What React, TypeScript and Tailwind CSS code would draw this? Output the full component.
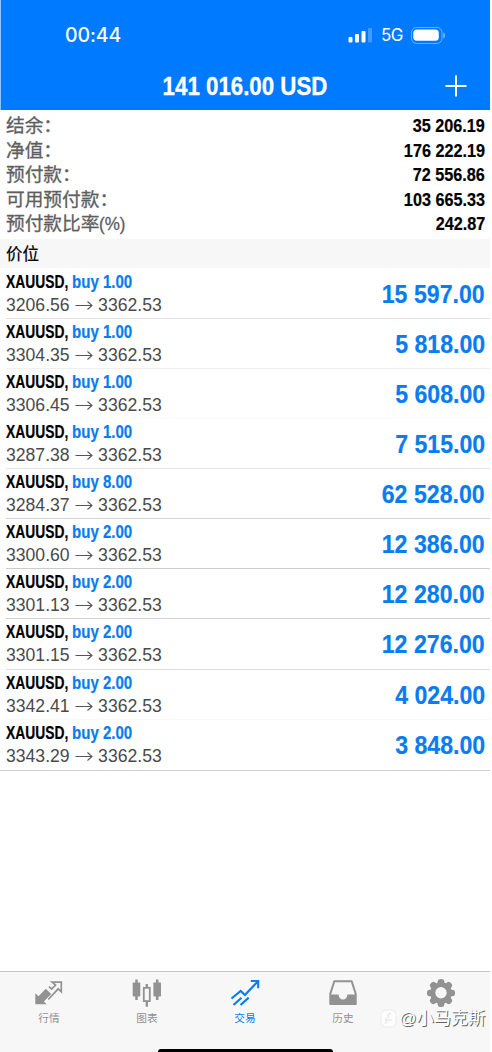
import type { ReactNode } from 'react';

const summary = [
  { label: '结余：', value: '35 206.19' },
  { label: '净值：', value: '176 222.19' },
  { label: '预付款：', value: '72 556.86' },
  { label: '可用预付款：', value: '103 665.33' },
  { label: '预付款比率', suffix: '(%)', value: '242.87' },
];

const positions = [
  { volume: '1.00', open: '3206.56', profit: '15 597.00', line: 'border-[#e0e0e0]' },
  { volume: '1.00', open: '3304.35', profit: '5 818.00', line: 'border-[#f0f0f0]' },
  { volume: '1.00', open: '3306.45', profit: '5 608.00', line: 'border-[#fcfcfc]' },
  { volume: '1.00', open: '3287.38', profit: '7 515.00', line: 'border-[#e4e4e4]' },
  { volume: '8.00', open: '3284.37', profit: '62 528.00', line: 'border-[#d2d2d2]' },
  { volume: '2.00', open: '3300.60', profit: '12 386.00', line: 'border-[#cccccc]' },
  { volume: '2.00', open: '3301.13', profit: '12 280.00', line: 'border-[#d2d2d2]' },
  { volume: '2.00', open: '3301.15', profit: '12 276.00', line: 'border-[#dedede]' },
  { volume: '2.00', open: '3342.41', profit: '4 024.00', line: 'border-[#f8f8f8]' },
  { volume: '2.00', open: '3343.29', profit: '3 848.00', line: 'border-transparent' },
];

const StatusBar = () => (
  <div className="flex h-[68px] items-center justify-between pl-[64px] pr-[44px] pt-[2px] text-white">
    <span className="pt-[2px] font-['Inter'] text-[19.5px] font-medium tracking-[-0.1px]">00:44</span>
    <div className="flex items-center">
      <svg className="mr-[8px]" width="25" height="16" viewBox="0 0 25 16" fill="#fff">
        <rect x="0.5" y="10" width="4" height="5.5" rx="1" />
        <rect x="7" y="7" width="4" height="8.5" rx="1" />
        <rect x="13.5" y="4" width="4" height="11.5" rx="1" />
        <rect x="20" y="1" width="4" height="14.5" rx="1" opacity="0.25" />
      </svg>
      <span className="w-[30px] pt-[2px] font-['Inter'] text-[17px] tracking-[-0.6px]">5G</span>
      <svg width="35" height="17" viewBox="0 0 35 17">
        <rect x="0.5" y="0.5" width="30.5" height="16" rx="5" fill="none" stroke="#fff" strokeOpacity="0.4" />
        <rect x="2.3" y="2.6" width="25.5" height="11.2" rx="3.6" fill="#fff" />
        <path d="M32.3 5.5c2.3.7 2.3 5.3 0 6z" fill="#fff" opacity="0.5" />
      </svg>
    </div>
  </div>
);

const Header = () => (
  <header className="mr-[2px] h-[110px] border-l border-[#8ec2fb] bg-[#007aff]">
    <StatusBar />
    <div className="grid h-[36px] grid-cols-[60px_1fr_60px] items-center text-white">
      <span />
      <h1 className="-ml-px origin-center scale-x-[0.857] whitespace-nowrap text-center text-[26px] font-bold leading-[36px] [-webkit-text-stroke:0.35px_currentColor]">
        141 016.00 USD
      </h1>
      <svg className="ml-[15px]" width="22" height="22" viewBox="0 0 22 22" stroke="#fff" strokeWidth="2">
        <path d="M11 0.5v21M0.5 11h21" />
      </svg>
    </div>
  </header>
);

const Arrow = () => (
  <svg className="ml-[5px] mr-[5.5px]" width="18" height="12" viewBox="0 0 18 12" fill="none" stroke="#555" strokeWidth="1.1">
    <path d="M0.5 6.5h16.5M12.5 2.5l4.5 4-4.5 4" />
  </svg>
);

const Tab = ({ label, active, children }: { label: string; active?: boolean; children: ReactNode }) => (
  <div className={active ? 'flex flex-col items-center text-[#087cf0]' : 'flex flex-col items-center text-[#929292]'}>
    <svg width="30" height="30" viewBox="0 0 30 30" fill="none" stroke="currentColor">
      {children}
    </svg>
    <span className="mt-[3px] h-[16px] text-[10.7px] leading-[16px]">{label}</span>
  </div>
);

const TabBar = () => (
  <nav className="relative mr-[2px] h-[81px] border-t border-[#c5c5c5] bg-[#f7f7f7]">
    <div className="grid grid-cols-5 pt-[5px]">
      <Tab label="行情">
        <path d="M1.3 27.3V16.2l3.2 3 7.3-7.4 5.4 5.3-7.3 7.4 2.8 2.8z" fill="currentColor" stroke="none" />
        <path d="M15 9.7l2.6 2.3 4-4-3.4-2.8H27.3V14.8L24.2 11.8 14.3 22.5" strokeWidth="1.7" />
      </Tab>
      <Tab label="图表">
        <path d="M4.5 2.5v20.5M25.2 2.5v20.5" strokeWidth="2.5" />
        <rect x="0.7" y="5.5" width="7.6" height="14" rx="0.7" fill="currentColor" stroke="none" />
        <rect x="21.4" y="5.5" width="7.6" height="14" rx="0.7" fill="currentColor" stroke="none" />
        <path d="M14.8 7v4M14.8 24.5v5.2" strokeWidth="2.3" />
        <rect x="11.8" y="10.8" width="6" height="13.3" strokeWidth="1.8" />
      </Tab>
      <Tab label="交易" active>
        <path d="M1.5 21.5L10.7 14l4.2 4L27.3 5M20.8 4h7.4v7.3" strokeWidth="2.1" />
        <path d="M3.5 28l8-7.3M10.5 28l8.2-7.4" strokeWidth="2.2" />
      </Tab>
      <Tab label="历史">
        <path d="M6.3 4.3h17.4l4 12.4v10.4H2.3V16.7z" strokeWidth="2" strokeLinejoin="round" />
        <path d="M2 17.5h8.5c.4 3.5 2 5 4.5 5s4.1-1.5 4.5-5H28v9.7H2z" fill="currentColor" stroke="none" />
      </Tab>
      <Tab label="">
        <g fill="currentColor" stroke="none">
          <path
            fillRule="evenodd"
            d="M12.2 2.8q2.8-1.8 5.6 0l.8 3 1 .4 2.8-1.5q3.2.7 3.9 3.9l-1.5 2.8.4 1 3 .8q1.8 2.8 0 5.6l-3 .8-.4 1 1.5 2.8q-.7 3.2-3.9 3.9l-2.8-1.5-1 .4-.8 3q-2.8 1.8-5.6 0l-.8-3-1-.4-2.8 1.5q-3.2-.7-3.9-3.9l1.5-2.8-.4-1-3-.8q-1.8-2.8 0-5.6l3-.8.4-1-1.5-2.8q.7-3.2 3.9-3.9l2.8 1.5 1-.4zM15 10a5.7 5.7 0 1 0 0 11.4a5.7 5.7 0 1 0 0-11.4z"
          />
        </g>
      </Tab>
    </div>
    {/* watermark */}
    <div className="absolute left-[380px] top-[34px] flex h-[24px] items-center">
      <svg width="17" height="19" viewBox="0 0 17 19" fill="none" strokeWidth="1.3">
        <rect x="1" y="1" width="15" height="17" rx="5" stroke="#f0f0f0" fill="#fdfdfd" />
        <path d="M6 15V9M6 11h6M8 9V6.5q0-2 3-2" stroke="#e9e9e9" />
      </svg>
      <span className="ml-[2px] whitespace-nowrap text-[17.2px] leading-[24px] text-white [text-shadow:1px_0.5px_0_#666]">
        @小马克斯
      </span>
    </div>
    <div className="absolute bottom-0 left-[158px] h-[3px] w-[175px] rounded-t-[3px] bg-black" />
  </nav>
);

export default function App() {
  return (
    <div className="flex h-[1052px] w-[492px] flex-col overflow-hidden bg-white font-['Liberation_Sans','Noto_Sans_CJK_SC',sans-serif] text-black">
      <Header />
      <section className="h-[129px] pl-[6px] pr-[7px] pt-[4px]">
        {summary.map((item) => (
          <div key={item.label} className="flex h-[24.5px] items-center justify-between">
            <span className="flex text-[18.7px] leading-[24px] text-[#5e5e5e] [-webkit-text-stroke:0.3px_currentColor]">
              {item.label}
              {item.suffix && <span className="origin-left scale-x-[0.91]">{item.suffix}</span>}
            </span>
            <span className="origin-right scale-x-[0.882] text-[18.4px] font-bold leading-[24px] [-webkit-text-stroke:0.2px_currentColor]">
              {item.value}
            </span>
          </div>
        ))}
      </section>
      <div className="mr-[2px] h-[28.5px] bg-[#f7f7f7] pl-[6px] text-[16.5px] leading-[30px] [-webkit-text-stroke:0.2px_currentColor]">
        价位
      </div>
      <main className="flex-1">
        <div className="mr-[2px] border-b border-[#d0d0d0] pt-[1px]">
          {positions.map((p) => (
            <div key={p.open} className={`ml-[6px] flex h-[50.15px] justify-between border-b pr-[5px] ${p.line}`}>
              <div className="pt-[2px]">
                <div className="flex h-[22px] items-center whitespace-nowrap text-[17.5px] font-bold leading-[22px] [-webkit-text-stroke:0.2px_currentColor]">
                  <span className="w-[65.5px]">
                    <span className="inline-block origin-left scale-x-[0.79]">XAUUSD,</span>
                  </span>
                  <span className="origin-left scale-x-[0.86] text-[#087cf0]">buy {p.volume}</span>
                </div>
                <div className="flex h-[24px] items-center text-[17.6px] leading-[24px] text-[#4a4a4a]">
                  <span>{p.open}</span>
                  <Arrow />
                  <span>3362.53</span>
                </div>
              </div>
              <span className="origin-right scale-x-[0.89] text-[26px] font-bold leading-[50px] text-[#087cf0] [-webkit-text-stroke:0.2px_currentColor]">
                {p.profit}
              </span>
            </div>
          ))}
        </div>
      </main>
      <TabBar />
    </div>
  );
}
